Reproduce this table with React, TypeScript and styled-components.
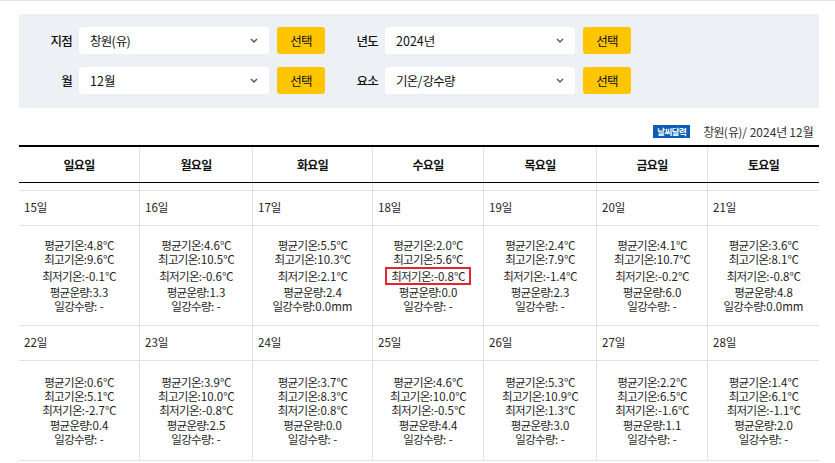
import React from "react";
import styled, { createGlobalStyle } from "styled-components";

const Global = createGlobalStyle`
  html, body { margin: 0; padding: 0; background: #fff; }
  body {
    font-family: "Noto Sans CJK KR", "Noto Sans", sans-serif;
    color: #222;
    border-top: 1px solid #e4e4e4;
  }
`;

const Page = styled.div`
  width: 800px;
  margin-left: 19px;
  padding-top: 13px;
`;

const FilterPanel = styled.div`
  background: #edf0f5;
  padding: 13px 0 14px;
  display: flex;
  flex-direction: column;
  gap: 13px;
`;

const FilterRow = styled.div`
  display: flex;
`;

const Group = styled.div`
  display: flex;
  align-items: center;
  width: 306px;
`;

const Label = styled.label`
  width: 53px;
  margin-right: 7px;
  text-align: right;
  font-size: 12.5px;
  font-weight: 500;
  color: #111;
`;

const Select = styled.div`
  width: 190px;
  height: 27px;
  box-sizing: border-box;
  background: #fff;
  border-radius: 3px;
  padding: 0 11px;
  display: flex;
  align-items: center;
  justify-content: space-between;
  font-size: 12.5px;
  color: #111;
  margin-right: 8px;
`;

const Chevron = () => (
  <svg width="8" height="5" viewBox="0 0 8 5">
    <path d="M1 1 L4 4 L7 1" fill="none" stroke="#555" strokeWidth="1.4" />
  </svg>
);

const Button = styled.button`
  width: 48px;
  height: 27px;
  border: none;
  border-radius: 3px;
  background: #ffc600;
  font-family: inherit;
  font-size: 12.5px;
  color: #111;
  padding: 0;
  cursor: pointer;
`;

const Legend = styled.div`
  display: flex;
  justify-content: flex-end;
  align-items: center;
  gap: 13px;
  height: 20px;
  margin: 13px 0 4px;
  padding-right: 6px;
`;

const Badge = styled.span`
  display: inline-flex;
  align-items: center;
  justify-content: center;
  width: 37px;
  height: 13px;
  background: #0a5fb4;
  color: #fff;
  font-size: 8.5px;
  font-weight: 700;
  letter-spacing: -0.6px;
`;

const Caption = styled.span`
  font-size: 12px;
  color: #333;
`;

const Table = styled.div`
  border-top: 2px solid #000;
`;

const Row = styled.div<{ $h: number; $line: string }>`
  display: grid;
  grid-template-columns: 120px 113px 120px 111px 113px 111px 112px;
  height: ${(p) => p.$h}px;
  border-bottom: 1px solid ${(p) => p.$line};
`;

const Cell = styled.div`
  & + & { border-left: 1px solid #dfe2ea; }
`;

const HeadCell = styled(Cell)`
  display: flex;
  align-items: center;
  justify-content: center;
  font-size: 12px;
  font-weight: 700;
  color: #111;
`;

const DateCell = styled(Cell)`
  display: flex;
  align-items: center;
  padding-left: 5px;
  padding-bottom: 2px;
  font-size: 11.5px;
  color: #222;
`;

const DataCell = styled(Cell)`
  display: flex;
  flex-direction: column;
  align-items: center;
  justify-content: center;
  font-size: 11.5px;
  line-height: 14.3px;
  color: #1d1d1d;
  white-space: nowrap;
`;

const MinLine = styled.span<{ $mark?: boolean; $boxed?: boolean }>`
  display: inline-block;
  ${(p) =>
    p.$boxed
      ? `line-height: 13px;
  padding: 1px 4px 0;
  border: 2px solid ${p.$mark ? "#e3262d" : "transparent"};`
      : ""}
`;

const Narrow = styled.span`
  letter-spacing: -0.06em;
`;

const T = ({ s }: { s: string }) => (
  <>
    {s.split(/([가-힣℃]+)/).map((p, i) =>
      /[가-힣℃]/.test(p) ? <Narrow key={i}>{p}</Narrow> : p
    )}
  </>
);

type Day = { d: number; avg: string; max: string; min: string; cloud: string; rain: string };

const MARKED = 18;

const week1: Day[] = [
  { d: 15, avg: "4.8", max: "9.6", min: "-0.1", cloud: "3.3", rain: " -" },
  { d: 16, avg: "4.6", max: "10.5", min: "-0.6", cloud: "1.3", rain: " -" },
  { d: 17, avg: "5.5", max: "10.3", min: "2.1", cloud: "2.4", rain: "0.0mm" },
  { d: 18, avg: "2.0", max: "5.6", min: "-0.8", cloud: "0.0", rain: " -" },
  { d: 19, avg: "2.4", max: "7.9", min: "-1.4", cloud: "2.3", rain: " -" },
  { d: 20, avg: "4.1", max: "10.7", min: "-0.2", cloud: "6.0", rain: " -" },
  { d: 21, avg: "3.6", max: "8.1", min: "-0.8", cloud: "4.8", rain: "0.0mm" },
];
const week2: Day[] = [
  { d: 22, avg: "0.6", max: "5.1", min: "-2.7", cloud: "0.4", rain: " -" },
  { d: 23, avg: "3.9", max: "10.0", min: "-0.8", cloud: "2.5", rain: " -" },
  { d: 24, avg: "3.7", max: "8.3", min: "0.8", cloud: "0.0", rain: " -" },
  { d: 25, avg: "4.6", max: "10.0", min: "-0.5", cloud: "4.4", rain: " -" },
  { d: 26, avg: "5.3", max: "10.9", min: "1.3", cloud: "3.0", rain: " -" },
  { d: 27, avg: "2.2", max: "6.5", min: "-1.6", cloud: "1.1", rain: " -" },
  { d: 28, avg: "1.4", max: "6.1", min: "-1.1", cloud: "2.0", rain: " -" },
];

const days = ["일요일", "월요일", "화요일", "수요일", "목요일", "금요일", "토요일"];

const Week = ({ data }: { data: Day[] }) => {
  const boxed = data.some((x) => x.d === MARKED);
  return (
    <>
      <Row $h={34} $line="#dfe2ea">
        {data.map((x) => (
          <DateCell key={x.d}>
            <T s={`${x.d}일`} />
          </DateCell>
        ))}
      </Row>
      <Row $h={99} $line="#dfe2ea">
        {data.map((x) => (
          <DataCell key={x.d}>
            <span><T s={`평균기온:${x.avg}℃`} /></span>
            <span><T s={`최고기온:${x.max}℃`} /></span>
            <MinLine $boxed={boxed} $mark={x.d === MARKED}>
              <T s={`최저기온:${x.min}℃`} />
            </MinLine>
            <span><T s={`평균운량:${x.cloud}`} /></span>
            <span><T s={`일강수량:${x.rain}`} /></span>
          </DataCell>
        ))}
      </Row>
    </>
  );
};

const Filter = ({ label, value }: { label: string; value: string }) => (
  <Group>
    <Label><T s={label} /></Label>
    <Select>
      <span><T s={value} /></span>
      <Chevron />
    </Select>
    <Button><T s="선택" /></Button>
  </Group>
);

export default function App() {
  return (
    <>
      <Global />
      <Page>
        <FilterPanel>
          <FilterRow>
            <Filter label="지점" value="창원(유)" />
            <Filter label="년도" value="2024년" />
          </FilterRow>
          <FilterRow>
            <Filter label="월" value="12월" />
            <Filter label="요소" value="기온/강수량" />
          </FilterRow>
        </FilterPanel>
        <Legend>
          <Badge>날씨달력</Badge>
          <Caption><T s="창원(유)/ 2024년 12월" /></Caption>
        </Legend>
        <Table>
          <Row $h={35} $line="#000">
            {days.map((d) => (
              <HeadCell key={d}><T s={d} /></HeadCell>
            ))}
          </Row>
          <Row $h={7} $line="#dfe2ea">
            {days.map((d) => (
              <Cell key={d} />
            ))}
          </Row>
          <Week data={week1} />
          <Week data={week2} />
        </Table>
      </Page>
    </>
  );
}
